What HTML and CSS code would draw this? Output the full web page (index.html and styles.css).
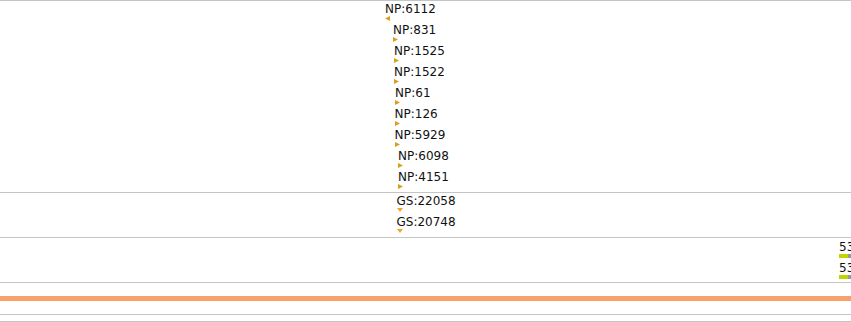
FILE: index.html
```html
<!DOCTYPE html>
<html>

<head>
  <title>Track View</title>
  <link rel="stylesheet" href="styles.css">
</head>

<body>

  <div class="viewer">
    <!-- Protein features -->
    <div class="track track-np">
      <div class="feature" style="margin-left: 385px">
        <span class="label">NP:6112</span>
        <svg class="arrow" width="6" height="5"><polygon points="5,0 0,2.5 5,5" /></svg>
      </div>
      <div class="feature" style="margin-left: 393px">
        <span class="label">NP:831</span>
        <svg class="arrow" width="5" height="5"><polygon points="0,0 5,2.5 0,5" /></svg>
      </div>
      <div class="feature" style="margin-left: 394px">
        <span class="label">NP:1525</span>
        <svg class="arrow" width="5" height="5"><polygon points="0,0 5,2.5 0,5" /></svg>
      </div>
      <div class="feature" style="margin-left: 394px">
        <span class="label">NP:1522</span>
        <svg class="arrow" width="5" height="5"><polygon points="0,0 5,2.5 0,5" /></svg>
      </div>
      <div class="feature" style="margin-left: 395px">
        <span class="label">NP:61</span>
        <svg class="arrow" width="5" height="5"><polygon points="0,0 5,2.5 0,5" /></svg>
      </div>
      <div class="feature" style="margin-left: 394.5px">
        <span class="label">NP:126</span>
        <svg class="arrow" width="5" height="5"><polygon points="0,0 5,2.5 0,5" /></svg>
      </div>
      <div class="feature" style="margin-left: 394.5px">
        <span class="label">NP:5929</span>
        <svg class="arrow" width="5" height="5"><polygon points="0,0 5,2.5 0,5" /></svg>
      </div>
      <div class="feature" style="margin-left: 398px">
        <span class="label">NP:6098</span>
        <svg class="arrow" width="5" height="5"><polygon points="0,0 5,2.5 0,5" /></svg>
      </div>
      <div class="feature" style="margin-left: 398px">
        <span class="label">NP:4151</span>
        <svg class="arrow" width="5" height="5"><polygon points="0,0 5,2.5 0,5" /></svg>
      </div>
    </div>

    <!-- Genomic sites -->
    <div class="track track-gs">
      <div class="feature" style="margin-left: 396.5px">
        <span class="label">GS:22058</span>
        <svg class="arrow arrow-down" width="6" height="4"><polygon points="0,0 6,0 3,4" /></svg>
      </div>
      <div class="feature" style="margin-left: 396.5px">
        <span class="label">GS:20748</span>
        <svg class="arrow arrow-down" width="6" height="4"><polygon points="0,0 6,0 3,4" /></svg>
      </div>
    </div>

    <!-- Scores -->
    <div class="track track-score">
      <div class="feature" style="margin-left: 839px">
        <span class="label label-score">53</span>
        <div class="bar"><span class="bar-fill"></span><span class="bar-end"></span></div>
      </div>
      <div class="feature" style="margin-left: 839px">
        <span class="label label-score">53</span>
        <div class="bar"><span class="bar-fill"></span><span class="bar-end"></span></div>
      </div>
    </div>

    <!-- Ruler -->
    <div class="track track-ruler">
      <div class="ruler-band"></div>
    </div>
    <div class="track track-empty"></div>
  </div>

</body>

</html>
```

FILE: styles.css
```css
* {
  font-family: "DejaVu Sans", sans-serif;
  box-sizing: border-box;
}

body {
  margin: 0;
  background-color: #ffffff;
  overflow: hidden;
}

.viewer {
  width: 851px;
  height: 322px;
  overflow: hidden;
  border-top: 1px solid #c4c4c4;
}

/* Tracks */
.track {
  display: flex;
  flex-direction: column;
  border-bottom: 1px solid #c4c4c4;
  overflow: hidden;
}

.track-np {
  height: 192px;
  padding-top: 1px;
}

.track-gs {
  height: 45px;
  padding-top: 1px;
}

.track-score {
  height: 45px;
  padding-top: 2px;
}

.track-ruler {
  height: 32px;
  padding-top: 13px;
}

.track-empty {
  height: 7px;
}

/* Features */
.feature {
  display: flex;
  flex-direction: column;
  align-items: flex-start;
  height: 21px;
  flex-shrink: 0;
}

.label {
  font-size: 12px;
  line-height: 14px;
  color: #111111;
  white-space: nowrap;
}

.arrow {
  display: block;
  fill: #d99e1c;
}

.arrow-down {
  fill: #f0a52a;
  margin-left: 0.5px;
}

/* Score bars */
.bar {
  display: flex;
  height: 4px;
  width: 20px;
}

.bar-fill {
  width: 9px;
  background-color: #c2d400;
}

.bar-end {
  width: 11px;
  background-color: #9a9a9a;
}

/* Ruler */
.ruler-band {
  height: 5px;
  background-color: #f7a26c;
}
```
